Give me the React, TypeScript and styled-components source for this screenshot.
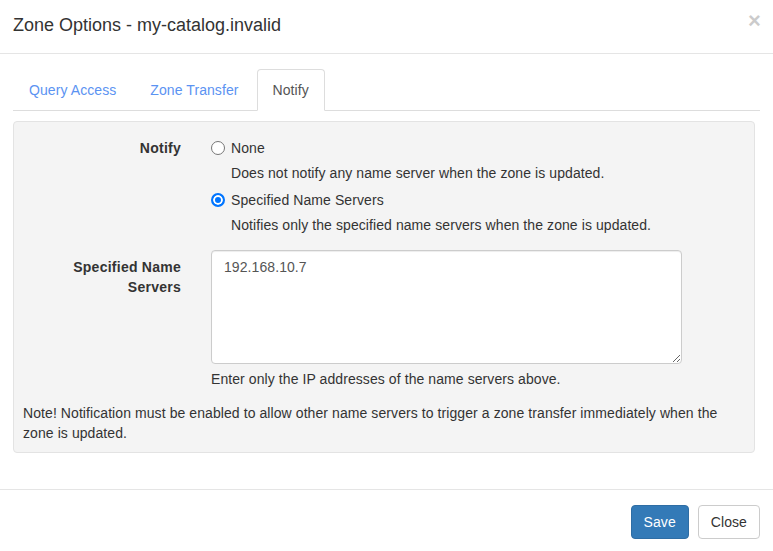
import React from "react";
import styled, { createGlobalStyle } from "styled-components";

const GlobalStyle = createGlobalStyle`
  * {
    box-sizing: border-box;
  }
  body {
    margin: 0;
    background: #fff;
    font-family: "Liberation Sans", Arial, sans-serif;
    font-size: 14px;
    line-height: 20px;
    letter-spacing: 0.08px;
    color: #333;
  }
`;

const tabs = ["Query Access", "Zone Transfer", "Notify"];

const App = () => {
  return (
    <>
      <GlobalStyle />
      <Modal>
        <Header>
          <Title>Zone Options - my-catalog.invalid</Title>
          <CloseX>×</CloseX>
        </Header>
        <Body>
          <Nav>
            {tabs.map((t) => (
              <Tab key={t} active={t === "Notify"}>
                {t}
              </Tab>
            ))}
          </Nav>
          <Well>
            <FormRow>
              <Label>Notify</Label>
              <div>
                <RadioLine>
                  <RadioDot />
                  None
                </RadioLine>
                <Desc>Does not notify any name server when the zone is updated.</Desc>
                <RadioLine>
                  <RadioDot checked />
                  Specified Name Servers
                </RadioLine>
                <Desc>Notifies only the specified name servers when the zone is updated.</Desc>
              </div>
            </FormRow>
            <FormRow>
              <Label padTop>Specified Name Servers</Label>
              <div>
                <TextArea defaultValue="192.168.10.7" rows={5} />
                <Help>Enter only the IP addresses of the name servers above.</Help>
              </div>
            </FormRow>
            <Note>
              Note! Notification must be enabled to allow other name servers to trigger a zone
              transfer immediately when the zone is updated.
            </Note>
          </Well>
        </Body>
        <Footer>
          <Button primary>Save</Button>
          <Button>Close</Button>
        </Footer>
      </Modal>
    </>
  );
};

export default App;

const Modal = styled.div`
  width: 773px;
  background: #fff;
`;

const Header = styled.div`
  display: flex;
  align-items: flex-start;
  justify-content: space-between;
  padding: 12px 13px 15px 13px;
  border-bottom: 1px solid #e5e5e5;
`;

const Title = styled.h4`
  margin: 0;
  font-size: 18px;
  font-weight: 400;
  line-height: 26px;
  letter-spacing: 0;
  color: #333;
`;

const CloseX = styled.span`
  font-size: 22px;
  font-weight: 700;
  line-height: 1;
  color: #000;
  opacity: 0.2;
  margin-top: -2px;
  margin-right: -1px;
`;

const Body = styled.div`
  padding: 15px 13px 15px 13px;
`;

const Nav = styled.div`
  display: flex;
  border-bottom: 1px solid #ddd;
`;

const Tab = styled.a<{ active?: boolean }>`
  display: block;
  margin-right: 2px;
  margin-bottom: -1px;
  padding: 10px 15px;
  line-height: 20px;
  border: 1px solid transparent;
  border-radius: 4px 4px 0 0;
  color: #5b93f2;
  cursor: pointer;
  ${(p) =>
    p.active &&
    `
    color: #555;
    background: #fff;
    border-color: #ddd;
    border-bottom-color: #fff;
  `}
`;

const Well = styled.div`
  margin: 10px 5px 21px 0;
  padding: 16px 9px 9px 9px;
  background: #f4f4f4;
  border: 1px solid #e3e3e3;
  border-radius: 4px;
`;

const FormRow = styled.div`
  display: grid;
  grid-template-columns: 158px 471px;
  column-gap: 30px;
  margin-bottom: 15px;
`;

const Label = styled.div<{ padTop?: boolean }>`
  text-align: right;
  font-weight: 700;
  letter-spacing: 0.25px;
  padding-top: ${(p) => (p.padTop ? "7px" : "0")};
`;

const RadioLine = styled.div`
  display: flex;
  align-items: center;
  gap: 6px;
  height: 20px;
`;

const RadioDot = styled.span<{ checked?: boolean }>`
  width: 14px;
  height: 14px;
  border-radius: 50%;
  flex: none;
  border: ${(p) => (p.checked ? "2px solid #0075ff" : "1px solid #767676")};
  background: ${(p) => (p.checked ? "#0075ff" : "#fff")};
  box-shadow: ${(p) => (p.checked ? "inset 0 0 0 2px #fff" : "none")};
`;

const Desc = styled.div`
  margin: 5px 0 7px 20px;
  &:last-child {
    margin-bottom: 0;
  }
`;

const TextArea = styled.textarea`
  display: block;
  width: 471px;
  height: 114px;
  margin: 0;
  padding: 6px 12px;
  font-family: "Liberation Sans", Arial, sans-serif;
  font-size: 14px;
  line-height: 20px;
  letter-spacing: 0.08px;
  color: #555;
  background: #fff;
  border: 1px solid #ccc;
  border-radius: 4px;
  box-shadow: inset 0 1px 1px rgba(0, 0, 0, 0.075);
  outline: none;
`;

const Help = styled.div`
  margin-top: 5px;
  color: #333;
`;

const Note = styled.div`
  margin-top: -1px;
  padding-right: 16px;
`;

const Footer = styled.div`
  display: flex;
  justify-content: flex-end;
  gap: 9px;
  padding: 15px 13px;
  border-top: 1px solid #e5e5e5;
`;

const Button = styled.button<{ primary?: boolean }>`
  padding: 6px 12px;
  font-family: "Liberation Sans", Arial, sans-serif;
  font-size: 14px;
  line-height: 20px;
  letter-spacing: 0.08px;
  border-radius: 4px;
  border: 1px solid ${(p) => (p.primary ? "#2e6da4" : "#ccc")};
  background: ${(p) => (p.primary ? "#337ab7" : "#fff")};
  color: ${(p) => (p.primary ? "#fff" : "#333")};
  cursor: pointer;
`;
